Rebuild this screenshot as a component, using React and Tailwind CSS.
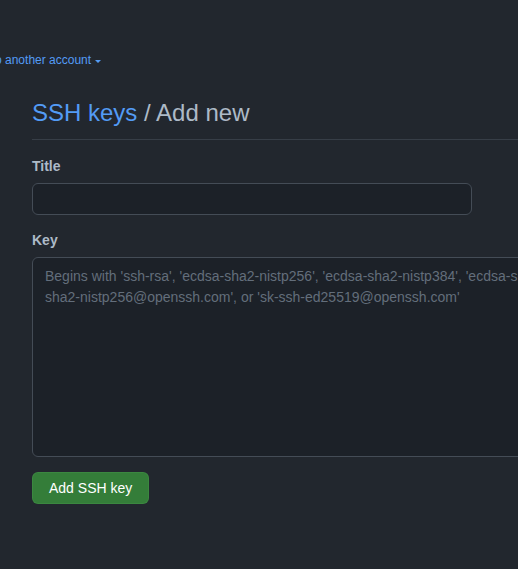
export default function App() {
  return (
    <div
      className="h-screen w-full overflow-hidden bg-[#22272e] text-[#adbac7]"
      style={{ fontFamily: '"Liberation Sans", Arial, sans-serif' }}
    >
      <div className="pt-[47px]">
        <a
          href="#"
          className="-ml-[47px] inline-flex items-center gap-[3px] text-[12px] leading-[18px] text-[#539bf5]"
        >
          Switch to another account
          <svg width="8" height="8" viewBox="0 0 8 8" className="mt-[1px]">
            <path d="M1 3h6L4 6z" fill="#539bf5" />
          </svg>
        </a>
      </div>

      <main className="ml-8 mt-[24px] w-[900px]">
        <div className="border-b border-[#373e47] pb-2">
          <h1 className="text-[24px] leading-[36px] font-normal">
            <a href="#" className="text-[#539bf5]">
              SSH keys
            </a>{" "}
            / Add new
          </h1>
        </div>

        <form className="mt-4">
          <div>
            <label className="block text-[14px] leading-[21px] font-bold">
              Title
            </label>
            <input
              type="text"
              className="mt-[6px] block h-8 w-[440px] rounded-md border border-[#444c56] bg-[#1c2128] px-3 text-[14px] text-[#adbac7] outline-none"
            />
          </div>

          <div className="mt-[15px]">
            <label className="block text-[14px] leading-[21px] font-bold">
              Key
            </label>
            <textarea
              placeholder={
                "Begins with 'ssh-rsa', 'ecdsa-sha2-nistp256', 'ecdsa-sha2-nistp384', 'ecdsa-sha2-nistp521', 'ssh-ed25519', 'sk-ecdsa-\nsha2-nistp256@openssh.com', or 'sk-ssh-ed25519@openssh.com'"
              }
              className="mt-[6px] block h-[200px] w-[880px] resize-none rounded-md border border-[#444c56] bg-[#1c2128] px-3 py-2 text-[14px] leading-[21px] text-[#adbac7] outline-none placeholder:text-[#636e7b]"
            />
          </div>

          <button
            type="submit"
            className="mt-[15px] h-8 rounded-md border border-[#46954a66] bg-[#347d39] px-4 text-[14px] font-medium text-white"
          >
            Add SSH key
          </button>
        </form>
      </main>
    </div>
  );
}
